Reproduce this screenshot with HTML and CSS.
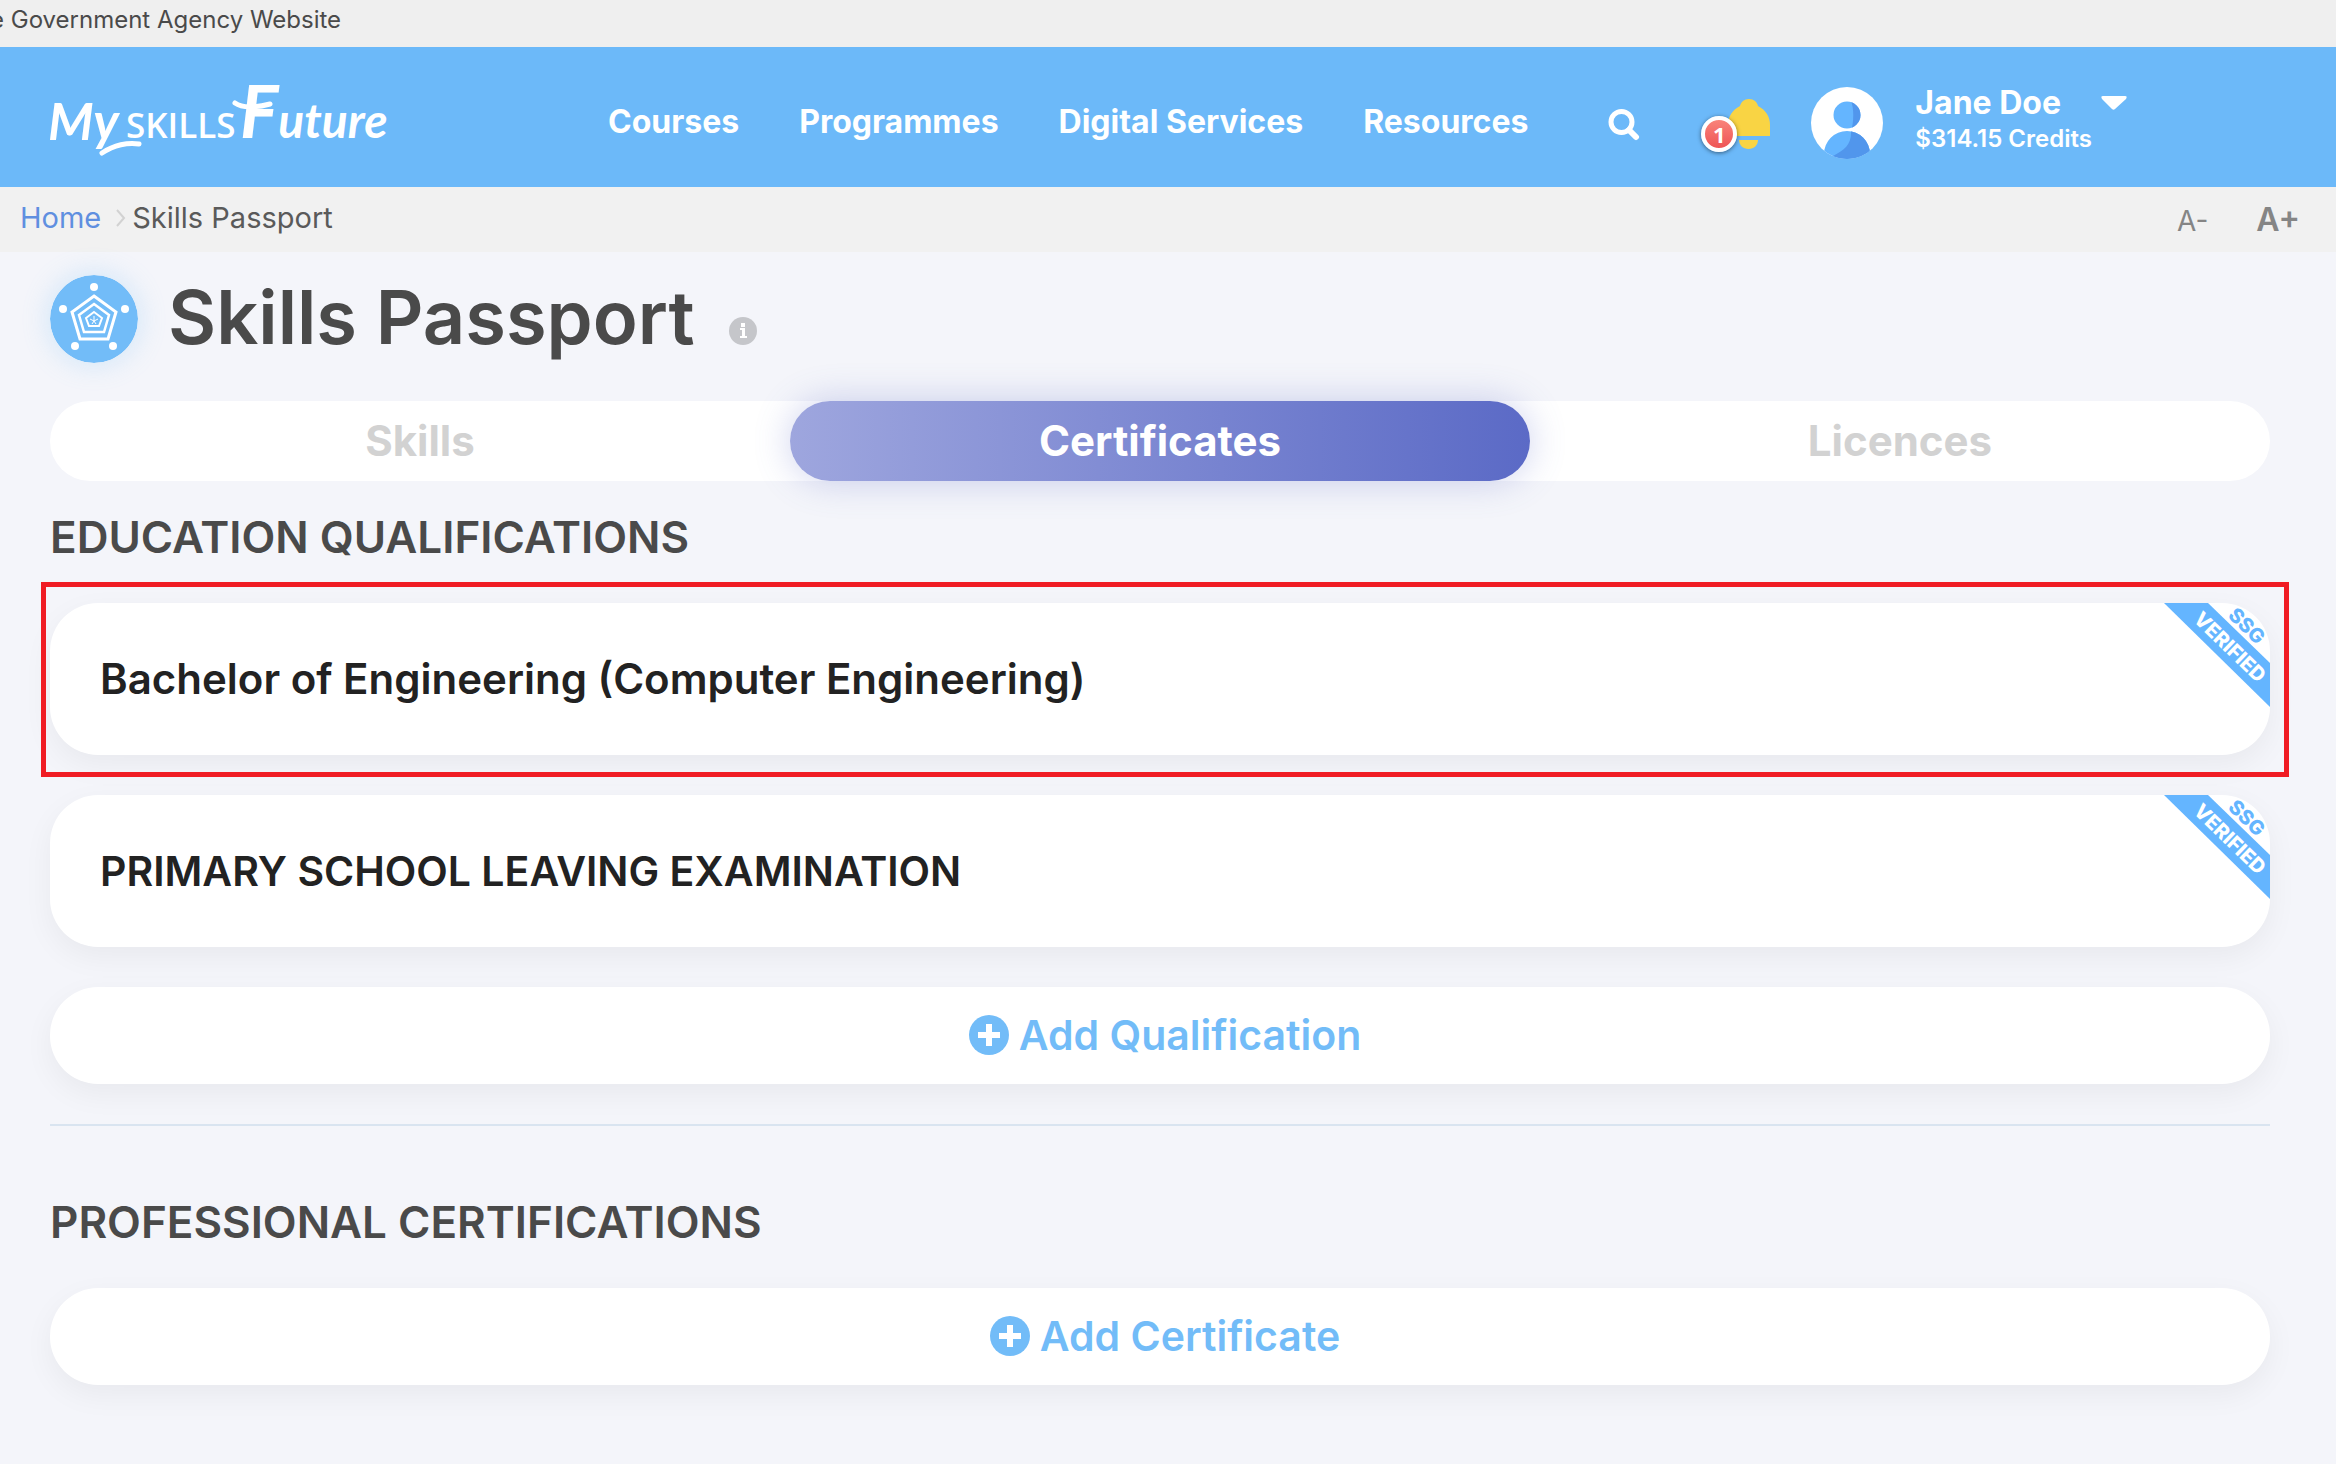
FILE: index.html
```html
<!DOCTYPE html>
<html lang="en">
<head>
<meta charset="utf-8">
<meta name="viewport" content="width=device-width, initial-scale=1">
<title>Skills Passport</title>
<link rel="stylesheet" href="styles.css">
</head>
<body>
<div class="agency-bar">e Government Agency Website</div>

<header class="site-header">
  <a class="logo" href="#" aria-label="MySkillsFuture">
    <svg width="340" height="116" viewBox="0 0 340 116">
      <text class="logo-script" x="0" y="81">My</text>
      <path class="logo-swash" d="M54 94C66 86 80 83 91 85"/>
      <text class="logo-skills" x="78" y="79">SKILLS</text>
      <path class="logo-swash" d="M187 44C194 49 208 49 222 45"/>
      <text class="logo-script" x="192" y="79"><tspan class="logo-f">F</tspan><tspan class="logo-end">uture</tspan></text>
    </svg>
  </a>
  <nav class="main-nav">
    <a href="#">Courses</a>
    <a href="#">Programmes</a>
    <a href="#">Digital Services</a>
    <a href="#">Resources</a>
  </nav>
  <button class="icon-button search" type="button" aria-label="Search">
    <svg width="32" height="32" viewBox="0 0 32 32"><circle cx="13.500" cy="13" r="10.500" fill="none" stroke="#fff" stroke-width="5"/><path d="M21 21L28 28" stroke="#fff" stroke-width="6" stroke-linecap="round"/></svg>
  </button>
  <button class="icon-button bell" type="button" aria-label="Notifications">
    <svg width="70" height="58" viewBox="0 0 70 58">
      <path d="M48 1c5 0 8 3 9 7 8 4 12 11 12 19v11H27V27c0-8 4-15 12-19 1-4 4-7 9-7z" fill="#f9d444"/>
      <path d="M38 42h19c0 5-4 9-9.500 9S38 47 38 42z" fill="#f9d444"/>
    </svg>
    <span class="badge">1</span>
  </button>
  <a class="account" href="#">
    <svg class="avatar" width="72" height="72" viewBox="0 0 72 72" aria-hidden="true">
      <defs>
        <clipPath id="disc"><circle cx="36" cy="36" r="36"/></clipPath>
        <clipPath id="figure"><circle cx="36" cy="28" r="13.500"/><circle cx="36" cy="67" r="23"/></clipPath>
      </defs>
      <circle cx="36" cy="36" r="36" fill="#fff"/>
      <g clip-path="url(#disc)"><g clip-path="url(#figure)">
        <path d="M0 0h72v72H0z" fill="#64b5ff"/>
        <path d="M40 14c3 7 3 21 0 30h20V14z" fill="#5196ec"/>
        <path d="M40 43c1 14-6 20-18 26l-4 3h54V43z" fill="#5196ec"/>
      </g></g>
    </svg>
    <span class="account-text">
      <span class="account-name">Jane Doe
        <svg width="26" height="14" viewBox="0 0 26 14" aria-hidden="true"><path d="M2 0h22c2 0 2 1 1 3L14 13c-1 1-2 1-3 0L1 3C0 1 0 0 2 0z" fill="#fff"/></svg>
      </span>
      <span class="account-credits">$314.15 Credits</span>
    </span>
  </a>
</header>

<div class="crumb-bar">
  <nav class="crumbs" aria-label="Breadcrumb">
    <a href="#">Home</a>
    <svg width="10" height="18" viewBox="0 0 10 18" aria-hidden="true"><path d="M1 1l7 8-7 8" fill="none" stroke="#d2d2d2" stroke-width="2"/></svg>
    <span>Skills Passport</span>
  </nav>
  <div class="text-size">
    <button class="smaller" type="button">A-</button>
    <button class="larger" type="button">A+</button>
  </div>
</div>

<main class="page">
  <div class="page-title">
    <svg class="title-icon" width="88" height="88" viewBox="0 0 88 88" aria-hidden="true">
      <circle cx="44" cy="44" r="44" fill="#72bcf8"/>
      <g fill="#fff"><circle cx="44" cy="12" r="4"/><circle cx="13" cy="34" r="4"/><circle cx="75" cy="34" r="4"/><circle cx="25" cy="71" r="4"/><circle cx="63" cy="71" r="4"/></g>
      <g fill="none" stroke="#fff">
        <path d="M44 21L66 37L58 64H30L22 37Z" stroke-width="3"/>
        <path d="M44 29L59 40L54 57H34L29 40Z" stroke-width="2.500"/>
        <path d="M44 37L52 43L49 51H39L36 43Z" stroke-width="2"/>
        <path d="M44 41v5M40 44l4 2 4-2M42 49l2-3 2 3" stroke-width="1"/>
      </g>
    </svg>
    <h1>Skills Passport</h1>
    <button class="icon-button info" type="button" aria-label="About the Skills Passport">
      <svg width="28" height="28" viewBox="0 0 28 28"><circle cx="14" cy="14" r="14" fill="#c5c6ca"/><path d="M11 11h5v8h2v2h-7v-2h2v-6h-2zM12 6h4v4h-4z" fill="#fff"/></svg>
    </button>
  </div>

  <nav class="tabs">
    <a href="#">Skills</a>
    <a class="active" href="#" aria-current="page">Certificates</a>
    <a href="#">Licences</a>
  </nav>

  <section class="education">
    <h2>EDUCATION QUALIFICATIONS</h2>
    <article class="card selected">
      <h3>Bachelor of Engineering (Computer Engineering)</h3>
      <svg class="ribbon" width="106" height="104" viewBox="0 0 106 104"><path d="M0 0H44L106 60V104Z" fill="#64b5ff"/><text class="ribbon-top" transform="translate(78 28) rotate(44)">SSG</text><text class="ribbon-band" transform="translate(61 49) rotate(44)">VERIFIED</text></svg>
    </article>
    <article class="card">
      <h3 class="caps">PRIMARY SCHOOL LEAVING EXAMINATION</h3>
      <svg class="ribbon" width="106" height="104" viewBox="0 0 106 104"><path d="M0 0H44L106 60V104Z" fill="#64b5ff"/><text class="ribbon-top" transform="translate(78 28) rotate(44)">SSG</text><text class="ribbon-band" transform="translate(61 49) rotate(44)">VERIFIED</text></svg>
    </article>
    <button class="add" type="button">
      <svg width="40" height="40" viewBox="0 0 40 40" aria-hidden="true"><circle cx="20" cy="20" r="20" fill="#72bcf8"/><path d="M17 9h6v8h8v6h-8v8h-6v-8H9v-6h8z" fill="#fff"/></svg>
      Add Qualification
    </button>
  </section>

  <section class="professional">
    <h2>PROFESSIONAL CERTIFICATIONS</h2>
    <button class="add" type="button">
      <svg width="40" height="40" viewBox="0 0 40 40" aria-hidden="true"><circle cx="20" cy="20" r="20" fill="#72bcf8"/><path d="M17 9h6v8h8v6h-8v8h-6v-8H9v-6h8z" fill="#fff"/></svg>
      Add Certificate
    </button>
  </section>
</main>
</body>
</html>
```
FILE: styles.css
```css
* { box-sizing: border-box; }

body {
  margin: 0;
  background: #f4f5fa;
  color: #4a4a4a;
  font-family: Inter, "Open Sans", sans-serif;
}

a { color: inherit; text-decoration: none; }
svg { display: block; flex: none; }
h1, h2, h3 { margin: 0; }

button {
  border: 0;
  padding: 0;
  background: none;
  font-family: inherit;
  cursor: pointer;
}

/* Agency strip */
.agency-bar {
  overflow: hidden;
  padding: 4px 0 11px;
  background: #efefef;
  font-size: 24px;
  line-height: 32px;
  text-indent: -10px;
  white-space: nowrap;
}

/* Header */
.site-header {
  display: flex;
  align-items: center;
  min-height: 140px;
  padding: 0 48px;
  background: #6cb9f9;
  color: #fff;
  white-space: nowrap;
}

.logo { margin-right: 220px; }
.logo text { fill: #fff; }
.logo-script { font: italic 700 52px Lato, sans-serif; }
.logo-skills { font: 600 35px "Open Sans", sans-serif; }
.logo-f { font-size: 72px; }
.logo-end { font-size: 48px; }
.logo-swash { fill: none; stroke: #fff; stroke-width: 5; stroke-linecap: round; }

.main-nav {
  display: flex;
  gap: 60px;
  padding-top: 10px;
  font-size: 32px;
  font-weight: 700;
  line-height: 40px;
}

.search { margin: 16px 61px 0 80px; }
.bell { position: relative; margin: 20px 40px 0 0; }

.badge {
  position: absolute;
  left: 0;
  top: 18px;
  width: 36px;
  height: 36px;
  border: 4px solid #fff;
  border-radius: 50%;
  background: linear-gradient(#f9837a, #ee5555);
  box-shadow: 0 1px 4px rgba(0, 0, 0, 0.5);
  color: #fff;
  font: 700 22px/28px "Noto Sans", sans-serif;
  text-align: center;
}

.account { display: flex; align-items: center; gap: 32px; }
.avatar { margin-top: 12px; }
.account-text { display: flex; flex-direction: column; padding-top: 6px; }
.account-name {
  display: flex;
  align-items: center;
  gap: 40px;
  font-size: 32px;
  font-weight: 700;
  line-height: 38px;
}
.account-credits { font-size: 24px; font-weight: 600; line-height: 34px; }

/* Breadcrumb */
.crumb-bar {
  display: flex;
  justify-content: space-between;
  min-height: 65px;
  padding: 0 36px 0 20px;
  background: #f1f1f1;
}
.crumbs {
  display: flex;
  align-items: center;
  padding-bottom: 4px;
  color: #5a5a5a;
  font-size: 29px;
}
.crumbs a { color: #5f8fe0; }
.crumbs svg { margin: 0 6px 0 15px; }
.text-size { display: flex; align-items: baseline; gap: 48px; padding-top: 13px; color: #858585; }
.text-size button { color: inherit; }
.smaller { font-size: 28px; }
.larger { font-size: 32px; font-weight: 600; }

/* Page */
.page { padding: 23px 66px 80px 50px; }

.page-title { display: flex; align-items: center; margin-bottom: 38px; }
.title-icon { margin-right: 30px; border-radius: 50%; box-shadow: 0 0 28px rgba(114, 188, 248, 0.3); }
h1 { font-size: 74px; font-weight: 600; line-height: 84px; padding-bottom: 4px; }
.info { margin: 24px 0 0 34px; }

.tabs {
  display: grid;
  grid-template-columns: repeat(3, 1fr);
  margin-bottom: 32px;
  border-radius: 40px;
  background: #fff;
  color: #d2d2d2;
  font-size: 42px;
  font-weight: 700;
  line-height: 80px;
  text-align: center;
}
.tabs .active {
  border-radius: 40px;
  background: linear-gradient(90deg, #9ea6de, #5b6ac6);
  box-shadow: 0 0 36px rgba(92, 107, 200, 0.3);
  color: #fff;
}

h2 { margin-bottom: 42px; font-size: 44px; font-weight: 600; line-height: 48px; }

.education { padding-bottom: 40px; border-bottom: 2px solid #d9e4f0; }
.professional { padding-top: 72px; }

.card {
  position: relative;
  margin-bottom: 40px;
  padding: 48px 50px;
  border-radius: 48px;
  background: #fff;
  box-shadow: 0 10px 30px rgba(0, 0, 0, 0.05);
  color: #222;
}
h3 { font-size: 42px; font-weight: 600; line-height: 56px; }
.caps { font-size: 41px; }

/* Outline drawn round the highlighted card */
.selected::after {
  content: "";
  position: absolute;
  inset: -21px -19px -22px -9px;
  border: 5px solid #f01c24;
}

.ribbon {
  position: absolute;
  top: 0;
  right: 0;
  border-top-right-radius: 48px;
}
.ribbon text { font: 800 20px Inter, sans-serif; text-anchor: middle; }
.ribbon-top { fill: #64b5ff; }
.ribbon-band { fill: #fff; }

.add {
  display: flex;
  align-items: center;
  justify-content: center;
  gap: 10px;
  width: 100%;
  min-height: 97px;
  padding: 0 0 2px 10px;
  border-radius: 48px;
  background: #fff;
  box-shadow: 0 10px 30px rgba(0, 0, 0, 0.05);
  color: #72bcf8;
  font-size: 41px;
  font-weight: 600;
}
```
